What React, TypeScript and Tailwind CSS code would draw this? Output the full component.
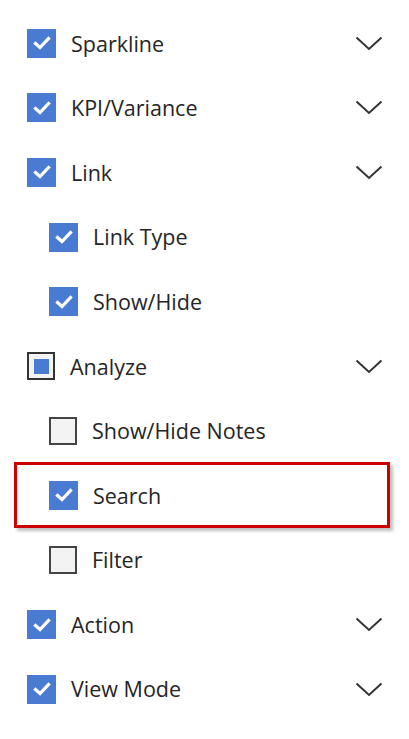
import React from "react";

type Row = { label: string; state: "checked" | "unchecked" | "indeterminate"; nested?: boolean; chevron?: boolean; highlight?: boolean };

const rows: Row[] = [
  { label: "Sparkline", state: "checked", chevron: true },
  { label: "KPI/Variance", state: "checked", chevron: true },
  { label: "Link", state: "checked", chevron: true },
  { label: "Link Type", state: "checked", nested: true },
  { label: "Show/Hide", state: "checked", nested: true },
  { label: "Analyze", state: "indeterminate", chevron: true },
  { label: "Show/Hide Notes", state: "unchecked", nested: true },
  { label: "Search", state: "checked", nested: true, highlight: true },
  { label: "Filter", state: "unchecked", nested: true },
  { label: "Action", state: "checked", chevron: true },
  { label: "View Mode", state: "checked", chevron: true },
];

function Box({ state }: { state: Row["state"] }) {
  if (state === "checked") {
    return (
      <div className="w-[29px] h-[29px] bg-[#4a7bd2] flex items-center justify-center shrink-0">
        <svg width="18" height="14" viewBox="0 0 18 14">
          <path d="M2.5 7.5 L7 11.5 L15.5 2.5" stroke="#ffffff" strokeWidth="3.2" fill="none" strokeLinecap="square" />
        </svg>
      </div>
    );
  }
  if (state === "indeterminate") {
    return (
      <div className="w-[28px] h-[28px] border-2 border-[#333333] bg-[#f3f3f3] flex items-center justify-center shrink-0">
        <div className="w-[15px] h-[15px] bg-[#4a7bd2]" />
      </div>
    );
  }
  return <div className="w-[28px] h-[28px] border-2 border-[#444444] bg-[#f3f3f3] shrink-0" />;
}

function Chevron() {
  return (
    <svg width="28" height="15" viewBox="0 0 28 15" className="shrink-0">
      <path d="M1.5 1.5 L14 13 L26.5 1.5" stroke="#333333" strokeWidth="2" fill="none" />
    </svg>
  );
}

export default function App() {
  return (
    <div className="w-[409px] h-[739px] bg-white pt-[11px] overflow-hidden" style={{ fontFamily: '"Open Sans", "Noto Sans", sans-serif' }}>
      {rows.map((r) => (
        <div key={r.label} className="relative h-[64.6px] flex items-center pr-[26px]">
          {r.highlight && (
            <div className="absolute left-[14px] top-[-1px] w-[376px] h-[66px] border-[3px] border-[#cc0000] shadow-[3px_3px_3px_rgba(0,0,0,0.25)]" />
          )}
          <div className={`flex items-center gap-[15px] flex-1 ${r.nested ? "pl-[49px]" : "pl-[27px]"}`}>
            <Box state={r.state} />
            <span className="text-[21.5px] text-[#252525] leading-none">{r.label}</span>
          </div>
          {r.chevron && <Chevron />}
        </div>
      ))}
    </div>
  );
}
